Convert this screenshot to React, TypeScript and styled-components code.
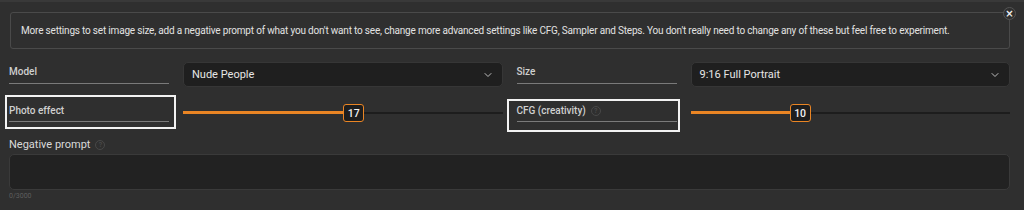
import React from "react";
import styled, { createGlobalStyle } from "styled-components";
import { ChevronDown } from "lucide-react";

const Global = createGlobalStyle`
  html, body { margin: 0; padding: 0; background: #2f2f2f; }
  body { font-family: Roboto, "Liberation Sans", Arial, sans-serif; }
  * { box-sizing: border-box; }
`;

const Page = styled.div`
  width: 1024px;
  height: 210px;
  background: #2f2f2f;
  border-top: 2px solid #393939;
  padding: 10px 14px 0 9px;
  overflow: hidden;
`;

const InfoBox = styled.div`
  position: relative;
  margin-left: 1px;
  height: 37px;
  border: 1px solid #4a4a4a;
  border-radius: 3px;
  display: flex;
  align-items: center;
  padding: 0 10px;
  color: #e2e2e2;
  font-size: 10px;
  letter-spacing: -0.19px;
  white-space: nowrap;
`;

const CloseButton = styled.button`
  position: absolute;
  top: -6px;
  right: -7px;
  width: 13px;
  height: 13px;
  border-radius: 50%;
  border: 1px solid #555;
  background: #2f2f2f;
  color: #f0f0f0;
  font-size: 10px;
  font-weight: 700;
  line-height: 9px;
  padding: 0;
  display: flex;
  align-items: center;
  justify-content: center;
  font-family: "DejaVu Sans", sans-serif;
`;

const Grid = styled.div`
  margin-top: 13px;
  display: grid;
  grid-template-columns: 160px 1fr 160px 1fr;
  column-gap: 14px;
  row-gap: 13px;
  grid-template-rows: 25px 25px;
`;

const LabelCell = styled.div<{ $top: number; $pad: number }>`
  position: relative;
  align-self: start;
  margin-top: ${(p) => p.$top}px;
  padding-bottom: ${(p) => p.$pad}px;
  border-bottom: 1px solid #7a7a7a;
  font-size: 10px;
  font-weight: 500;
  line-height: 12px;
  color: #d0d0d0;
  display: flex;
  align-items: center;
  gap: 5px;
`;

const Highlight = styled.div<{ $l: number; $t: number; $r: number; $b: number }>`
  position: absolute;
  left: ${(p) => p.$l}px;
  top: ${(p) => p.$t}px;
  right: ${(p) => p.$r}px;
  bottom: ${(p) => p.$b}px;
  border: 2px solid #f2f2f2;
  pointer-events: none;
`;

const Select = styled.div`
  height: 25px;
  background: #1f1f1f;
  border: 1px solid #363636;
  border-radius: 5px;
  display: flex;
  align-items: center;
  justify-content: space-between;
  padding: 0 8px 0 8px;
  color: #e6e6e6;
  font-size: 11px;
  font-weight: 400;
`;

const SliderWrap = styled.div`
  position: relative;
  height: 25px;
`;

const Track = styled.div`
  position: absolute;
  left: 0;
  right: 0;
  top: 12px;
  height: 2px;
  background: #1d1d1d;
`;

const Fill = styled.div`
  position: absolute;
  left: 0;
  top: 11px;
  height: 3px;
  background: #ea8524;
`;

const Thumb = styled.div`
  position: absolute;
  top: 4px;
  width: 21px;
  height: 18px;
  background: #1e1e1e;
  border: 1.5px solid #ea8524;
  border-radius: 3px;
  color: #f2f2f2;
  font-size: 10.5px;
  font-weight: 500;
  display: flex;
  align-items: center;
  justify-content: center;
`;

const Help = styled.span<{ $size: number }>`
  width: ${(p) => p.$size}px;
  height: ${(p) => p.$size}px;
  border-radius: 50%;
  border: 1px solid #484848;
  color: #484848;
  font-size: ${(p) => p.$size - 3}px;
  line-height: 1;
  display: inline-flex;
  align-items: center;
  justify-content: center;
  font-weight: 700;
`;

const PromptLabel = styled.div`
  margin-top: 14px;
  font-size: 11px;
  font-weight: 400;
  line-height: 12px;
  color: #dadada;
  display: flex;
  align-items: center;
  gap: 5px;
`;

const TextArea = styled.div`
  margin-top: 3px;
  height: 36px;
  background: #222222;
  border: 1px solid #3a3a3a;
  border-radius: 5px;
`;

const Counter = styled.div`
  margin-top: 2px;
  font-size: 7px;
  line-height: 8px;
  color: #5e5e5e;
`;

type SliderProps = { value: number; pct: number };

const Slider: React.FC<SliderProps> = ({ value, pct }) => (
  <SliderWrap>
    <Track />
    <Fill style={{ width: `calc((100% - 21px) * ${pct})` }} />
    <Thumb style={{ left: `calc((100% - 21px) * ${pct})` }}>{value}</Thumb>
  </SliderWrap>
);

export default function App() {
  return (
    <>
      <Global />
      <Page>
        <InfoBox>
          More settings to set image size, add a negative prompt of what you don't want to see, change more advanced settings like CFG, Sampler and Steps. You don't really need to change any of these but feel free to experiment.
          <CloseButton>×</CloseButton>
        </InfoBox>
        <Grid>
          <LabelCell $top={4} $pad={5}>Model</LabelCell>
          <Select>
            Nude People
            <ChevronDown size={12} color="#bdbdbd" strokeWidth={2} />
          </Select>
          <LabelCell $top={4} $pad={5}>Size</LabelCell>
          <Select>
            9:16 Full Portrait
            <ChevronDown size={12} color="#bdbdbd" strokeWidth={2} />
          </Select>

          <LabelCell $top={5} $pad={4}>
            Photo effect
            <Highlight $l={-4} $t={-10} $r={-7} $b={-8} />
          </LabelCell>
          <Slider value={17} pct={0.537} />
          <LabelCell $top={5} $pad={4}>
            CFG (creativity) <Help $size={10}>?</Help>
            <Highlight $l={-10} $t={-6} $r={-3} $b={-11} />
          </LabelCell>
          <Slider value={10} pct={0.332} />
        </Grid>
        <PromptLabel>
          Negative prompt <Help $size={10}>?</Help>
        </PromptLabel>
        <TextArea />
        <Counter>0/3000</Counter>
      </Page>
    </>
  );
}
